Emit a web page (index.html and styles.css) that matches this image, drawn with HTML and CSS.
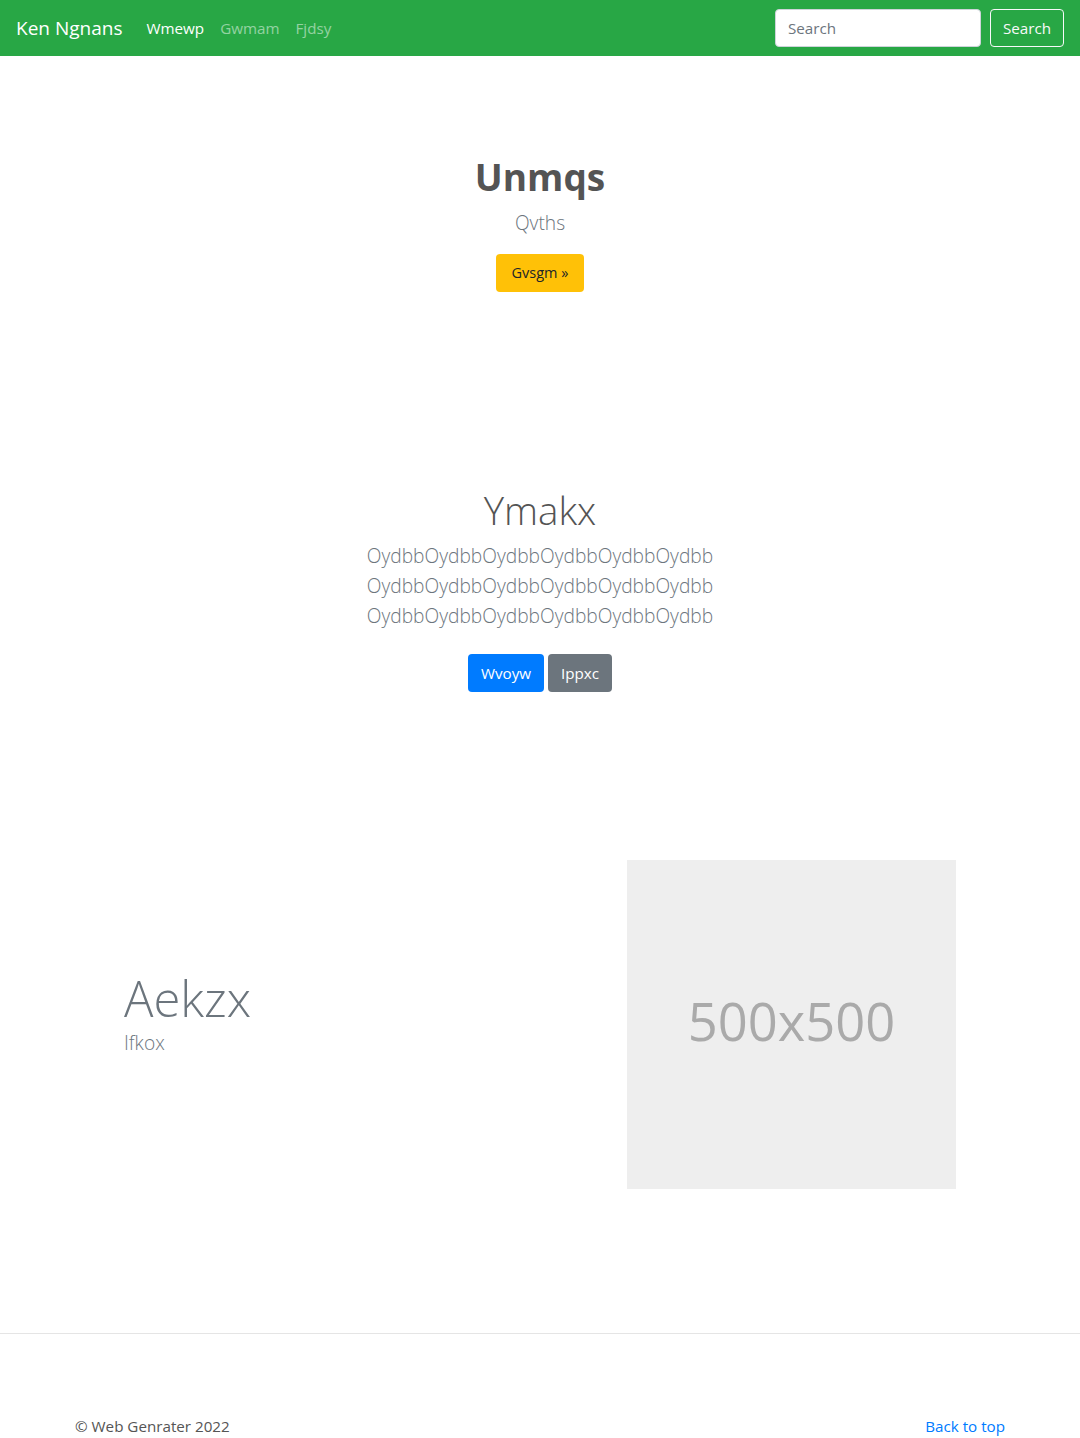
FILE: index.html
```html
<!DOCTYPE html>
<html lang="en">
<head>
<meta charset="utf-8">
<title>Ken Ngnans</title>
<link rel="stylesheet" href="styles.css">
</head>
<body>
<nav class="navbar">
  <a class="brand" href="#">Ken Ngnans</a>
  <ul class="nav">
    <li><a class="nav-link active" href="#">Wmewp</a></li>
    <li><a class="nav-link" href="#">Gwmam</a></li>
    <li><a class="nav-link" href="#">Fjdsy</a></li>
  </ul>
  <form class="search">
    <input class="search-input" type="text" placeholder="Search">
    <button class="btn btn-outline-light" type="button">Search</button>
  </form>
</nav>

<section class="hero">
  <h1 class="hero-title">Unmqs</h1>
  <p class="lead">Qvths</p>
  <a class="btn btn-warning" href="#">Gvsgm »</a>
</section>

<section class="intro">
  <h1 class="intro-title">Ymakx</h1>
  <p class="lead">OydbbOydbbOydbbOydbbOydbbOydbb<br>OydbbOydbbOydbbOydbbOydbbOydbb<br>OydbbOydbbOydbbOydbbOydbbOydbb</p>
  <p class="actions">
    <a class="btn btn-primary" href="#">Wvoyw</a>
    <a class="btn btn-secondary" href="#">Ippxc</a>
  </p>
</section>

<section class="feature">
  <div class="feature-text">
    <h2 class="display">Aekzx</h2>
    <p class="lead">Ifkox</p>
  </div>
  <div class="placeholder">500x500</div>
</section>

<footer class="footer">
  <div class="footer-inner">
    <p>© Web Genrater 2022</p>
    <a href="#">Back to top</a>
  </div>
</footer>
</body>
</html>
```

FILE: styles.css
```css
* { box-sizing: border-box; }
body {
  margin: 0;
  font-family: "Open Sans", "Noto Sans", sans-serif;
  font-size: 15.2px;
  line-height: 24px;
  color: #212529;
  background: #fff;
}
a { text-decoration: none; }

.navbar {
  height: 56px;
  background: #28a745;
  display: flex;
  align-items: center;
  padding: 0 16px;
}
.brand {
  color: #fff;
  font-size: 19px;
  margin-right: 16px;
}
.nav {
  list-style: none;
  margin: 0;
  padding: 0;
  display: flex;
  flex: 1;
}
.nav-link {
  display: block;
  padding: 8px;
  color: rgba(255,255,255,.5);
}
.nav-link.active { color: #fff; }
.search { display: flex; align-items: center; }
.search-input {
  width: 206px;
  height: 38px;
  padding: 6px 12px;
  font: inherit;
  color: #495057;
  border: 1px solid #ced4da;
  border-radius: 4px;
  margin-right: 9px;
}
.search-input::placeholder { color: #6c757d; }

.btn {
  display: inline-block;
  height: 38px;
  padding: 6px 12px;
  font: inherit;
  line-height: 24px;
  border: 1px solid transparent;
  border-radius: 4px;
  cursor: pointer;
}
.btn-outline-light { color: #f8f9fa; border-color: #f8f9fa; background: transparent; }
.btn-warning { background: #ffc107; color: #212529; font-size: 14.5px; padding: 6px 15px; }
.btn-primary { background: #007bff; color: #fff; }
.btn-secondary { background: #6c757d; color: #fff; }

.lead {
  font-size: 19.2px;
  font-weight: 300;
  line-height: 30px;
  color: #6c757d;
  margin: 0 0 16px;
}

.hero {
  text-align: center;
  padding-top: 97px;
}
.hero-title {
  font-size: 37px;
  font-weight: 700;
  line-height: 48px;
  color: #545454;
  margin: 0 0 7px;
}

.intro {
  text-align: center;
  padding-top: 194px;
}
.intro-title {
  font-size: 38.5px;
  font-weight: 300;
  line-height: 48px;
  color: #545454;
  margin: 0 0 7px;
}
.actions { margin: 23px 0 0; }

.feature {
  display: flex;
  align-items: center;
  justify-content: space-between;
  padding: 168px 124px 0;
}
.display {
  font-size: 49px;
  font-weight: 300;
  line-height: 60px;
  color: #6c757d;
  margin: 0;
}
.feature-text { padding-bottom: 8px; }
.feature-text .lead { margin-bottom: 16px; }
.placeholder {
  width: 329px;
  height: 329px;
  background: #eee;
  color: #aaa;
  font-size: 52.5px;
  display: flex;
  align-items: center;
  justify-content: center;
  padding-bottom: 8px;
}

.footer {
  margin-top: 144px;
  border-top: 1px solid #e5e5e5;
  padding-top: 80px;
}
.footer-inner {
  width: 960px;
  margin: 0 auto;
  padding: 0 15px;
  display: flex;
  justify-content: space-between;
}
.footer-inner p { margin: 0; color: #555; }
.footer-inner a { color: #007bff; }
```
